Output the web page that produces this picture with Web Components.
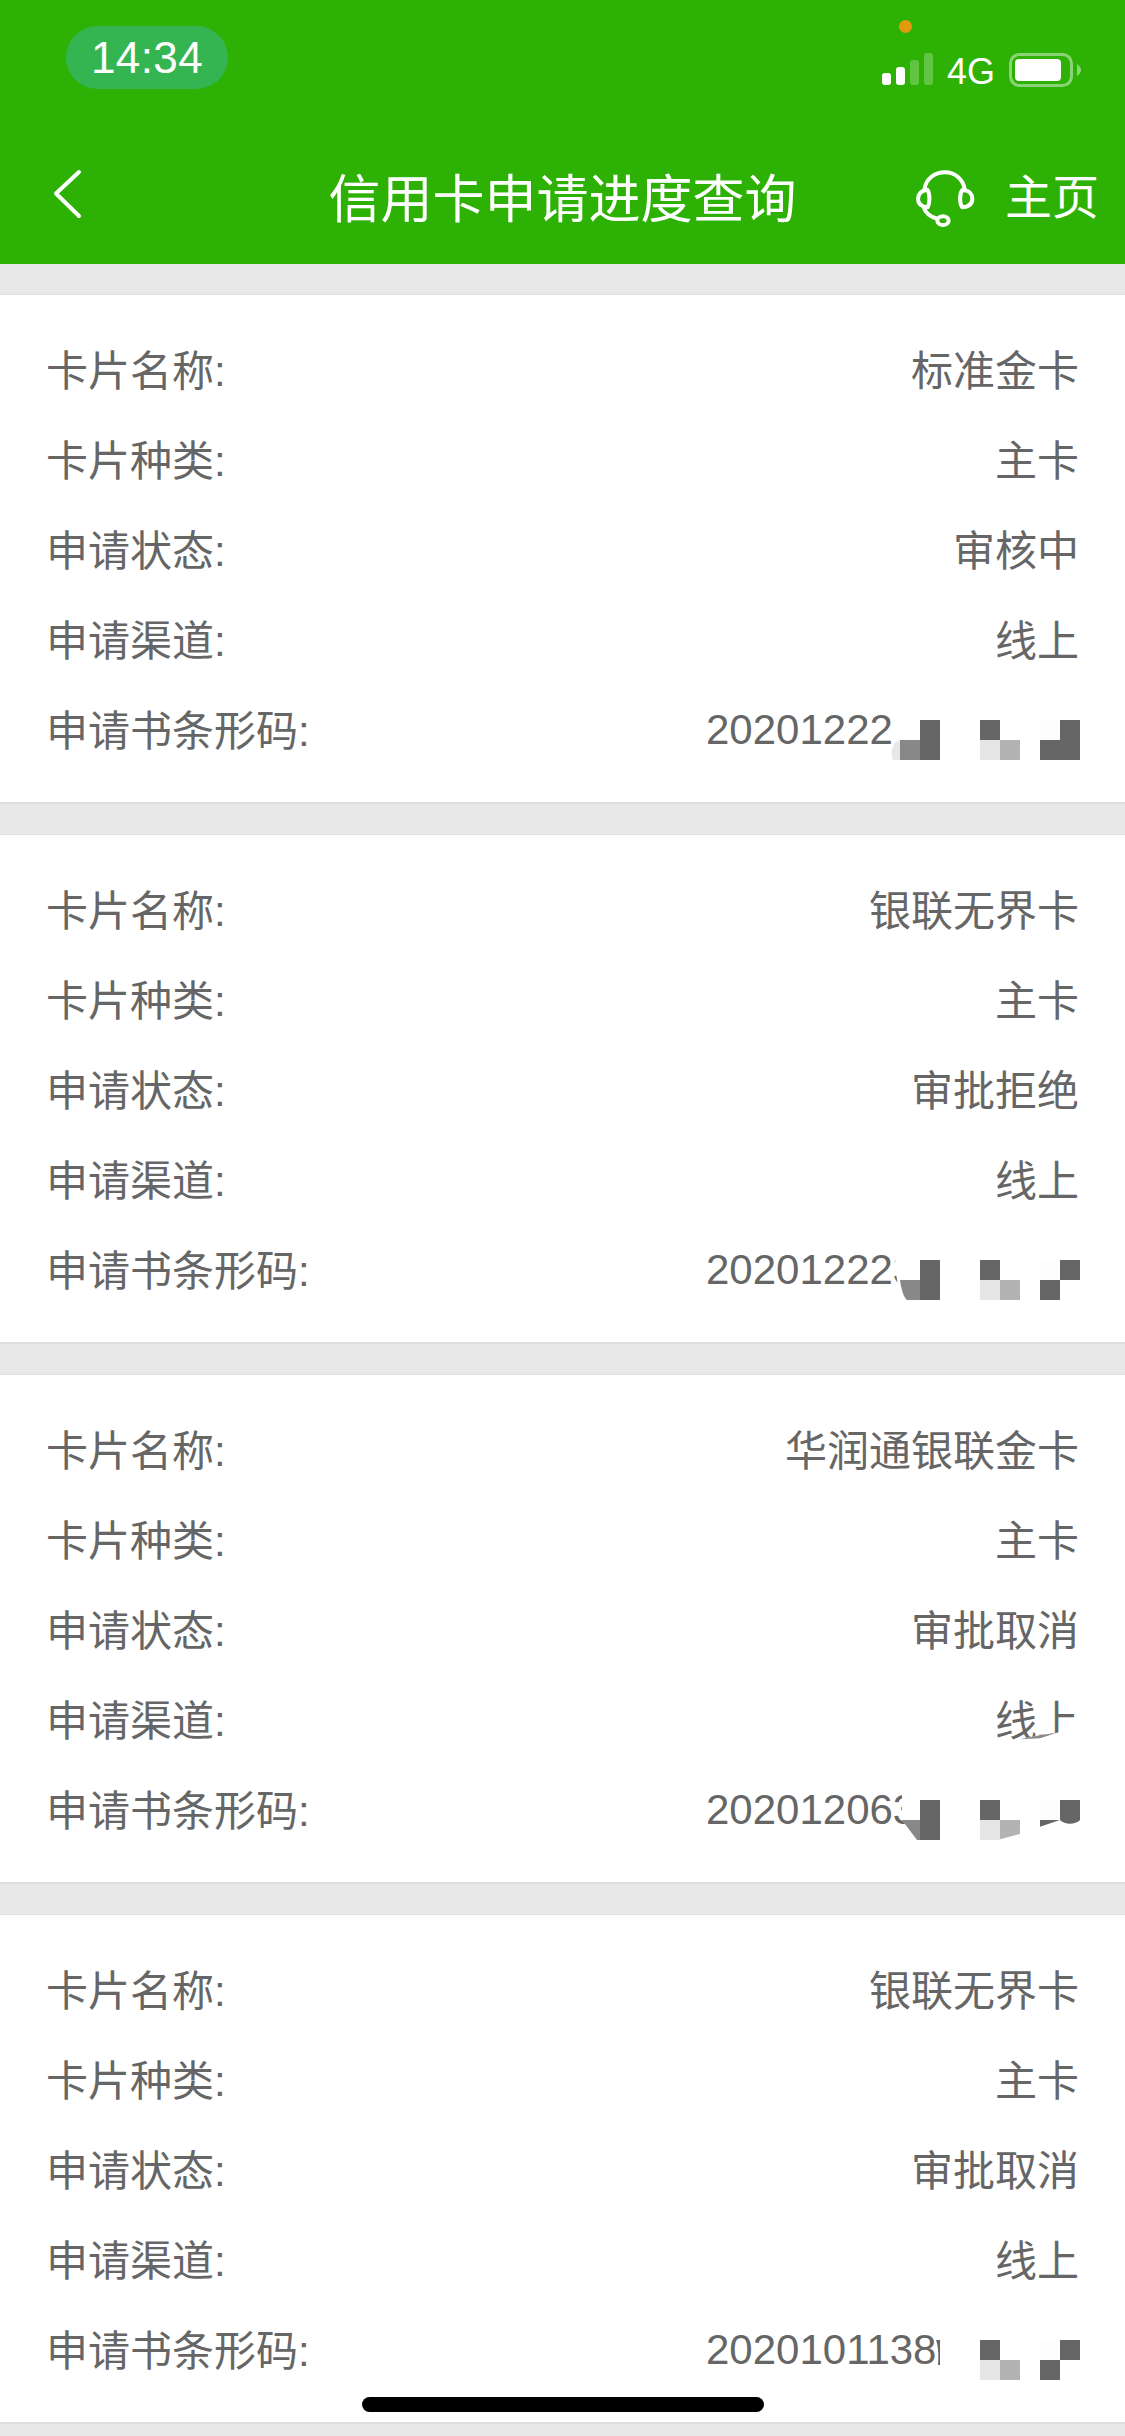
<!DOCTYPE html>
<html lang="zh-CN">
<head>
<meta charset="utf-8">
<title>信用卡申请进度查询</title>
<style>
html,body{margin:0;padding:0;height:2436px;overflow:hidden;background:#e8e8e8;}
body{font-family:"Liberation Sans","Noto Sans CJK SC",sans-serif;color:#666;position:relative;}
.code{display:block;width:373px;margin-top:6px;}
</style>
</head>
<body>
<app-header></app-header>
<card-list>
  <info-card>
    <info-row><span slot="label">卡片名称:</span>标准金卡</info-row>
    <info-row><span slot="label">卡片种类:</span>主卡</info-row>
    <info-row><span slot="label">申请状态:</span>审核中</info-row>
    <info-row><span slot="label">申请渠道:</span>线上</info-row>
    <info-row><span slot="label">申请书条形码:</span><span class="code">20201222</span><code-mask slot="overlay" variant="a"></code-mask></info-row>
  </info-card>
  <info-card>
    <info-row><span slot="label">卡片名称:</span>银联无界卡</info-row>
    <info-row><span slot="label">卡片种类:</span>主卡</info-row>
    <info-row><span slot="label">申请状态:</span>审批拒绝</info-row>
    <info-row><span slot="label">申请渠道:</span>线上</info-row>
    <info-row><span slot="label">申请书条形码:</span><span class="code">202012223</span><code-mask slot="overlay" variant="b"></code-mask></info-row>
  </info-card>
  <info-card>
    <info-row><span slot="label">卡片名称:</span>华润通银联金卡</info-row>
    <info-row><span slot="label">卡片种类:</span>主卡</info-row>
    <info-row><span slot="label">申请状态:</span>审批取消</info-row>
    <info-row><span slot="label">申请渠道:</span>线上<code-mask slot="overlay" variant="smear"></code-mask></info-row>
    <info-row><span slot="label">申请书条形码:</span><span class="code">202012063</span><code-mask slot="overlay" variant="c"></code-mask></info-row>
  </info-card>
  <info-card>
    <info-row><span slot="label">卡片名称:</span>银联无界卡</info-row>
    <info-row><span slot="label">卡片种类:</span>主卡</info-row>
    <info-row><span slot="label">申请状态:</span>审批取消</info-row>
    <info-row><span slot="label">申请渠道:</span>线上</info-row>
    <info-row><span slot="label">申请书条形码:</span><span class="code">2020101138</span><code-mask slot="overlay" variant="d"></code-mask></info-row>
  </info-card>
</card-list>
<home-indicator></home-indicator>

<script>
function shell(name, html){
  customElements.define(name, class extends HTMLElement{
    constructor(){super();this.attachShadow({mode:'open'}).innerHTML=html;}
  });
}

shell('status-bar', `
<style>
:host{display:flex;justify-content:space-between;align-items:flex-start;height:132px;box-sizing:border-box;padding:26px 44px 0 66px;position:relative;color:#fff;font-family:"Liberation Sans",sans-serif;}
.pill{width:162px;height:63px;border-radius:32px;background:#35b552;display:flex;align-items:center;justify-content:center;font-size:44px;letter-spacing:.4px;line-height:1;}
.right{display:flex;align-items:flex-start;padding-top:27px;}
.net{font-size:36px;line-height:36px;margin:1px 14px 0 14px;letter-spacing:0;}
svg{display:block;}
.dot{position:absolute;left:899px;top:20px;width:13px;height:13px;border-radius:50%;background:#e19a0e;}
</style>
<div class="pill">14:34</div>
<div class="right">
  <svg width="51" height="32" viewBox="0 0 51 32" fill="#fff">
    <rect x="0" y="20" width="9" height="12" rx="3"/>
    <rect x="14" y="14" width="9" height="18" rx="3"/>
    <rect x="28" y="7" width="9" height="25" rx="3" fill-opacity=".25"/>
    <rect x="42" y="0" width="9" height="32" rx="3" fill-opacity=".25"/>
  </svg>
  <span class="net">4G</span>
  <svg width="72" height="34" viewBox="0 0 72 34">
    <rect x="1.5" y="1.5" width="61" height="31" rx="9" fill="none" stroke="#fff" stroke-opacity=".45" stroke-width="3"/>
    <rect x="6" y="6" width="46" height="22" rx="4" fill="#fff"/>
    <path d="M68 11 C71 13 72 15 72 17 C72 19 71 21 68 23Z" fill="#fff" fill-opacity=".45"/>
  </svg>
</div>
<div class="dot"></div>`);

shell('nav-bar', `
<style>
:host{display:grid;grid-template-columns:1fr auto 1fr;align-items:center;height:132px;box-sizing:border-box;padding-bottom:4px;color:#fff;font-family:"Noto Sans CJK SC",sans-serif;}
.back{padding-left:51px;display:flex;margin-bottom:4px;}
.title{font-size:52px;line-height:1;}
.right{display:flex;justify-content:flex-end;align-items:center;gap:29px;padding-right:26px;font-size:47px;line-height:1;}
.right span{margin-bottom:5px;}
svg{display:block;}
.hs{margin-top:6px;}
</style>
<div class="back"><svg width="32" height="50" viewBox="0 0 32 50"><path d="M28 3 L5 24.5 L28 47" fill="none" stroke="#fff" stroke-width="4" stroke-linecap="round" stroke-linejoin="round"/></svg></div>
<div class="title">信用卡申请进度查询</div>
<div class="right">
  <svg class="hs" width="62" height="60" viewBox="105 55 186 180" fill="none" stroke="#fff" stroke-width="12" stroke-linecap="round" stroke-linejoin="round">
    <path d="M137 115 C140 84 168 65 198 65 C228 65 252 85 258 118"/>
    <path d="M146 118 C126 118 117 132 117 145 C117 158 126 168 146 170 C153 158 153 130 146 118Z"/>
    <path d="M250 118 C272 118 280 132 280 145 C280 158 270 168 250 170 C241 158 241 130 250 118Z"/>
    <path d="M134 170 C140 188 154 198 174 204"/>
    <ellipse cx="192" cy="210" rx="17" ry="13"/>
  </svg>
  <span>主页</span>
</div>`);

shell('app-header', `
<style>:host{display:block;background:#2cb104;height:264px;}</style>
<status-bar></status-bar><nav-bar></nav-bar>`);

shell('card-list', `
<style>:host{display:flex;flex-direction:column;gap:30px;padding-top:30px;}</style>
<slot></slot>`);

shell('info-card', `
<style>:host{display:block;background:#fff;border-top:1px solid #e2e2e2;border-bottom:2px solid #dedede;padding:30px 0 27px;box-sizing:border-box;height:510px;}</style>
<slot></slot>`);

shell('info-row', `
<style>
:host{display:flex;justify-content:space-between;align-items:center;height:90px;padding:0 46px 6px;box-sizing:border-box;position:relative;font-size:42px;color:#666;white-space:nowrap;}
.val{display:block;}
</style>
<slot name="label"></slot><span class="val"><slot></slot></span><slot name="overlay"></slot>`);

const R=(x,y,w,h,f)=>`<rect x="${x}" y="${y}" width="${w}" height="${h}" fill="${f}"/>`;
const mid=R(980,35,20,20,'#666')+R(980,55,20,20,'#e6e6e6')+R(1000,55,20,20,'#b3b3b3');
const checker=R(1040,35,20,20,'#fdfdfd')+R(1040,55,20,20,'#666')+R(1060,35,20,20,'#666');
const V={
 a:`<path d="M900 55 C892 57 890 67 893 75 L900 75Z" fill="#e8e8e8"/>`+R(900,55,20,20,'#888')+R(920,35,20,40,'#666')+mid+R(1040,35,20,20,'#fdfdfd')+R(1040,55,20,20,'#666')+R(1060,35,20,40,'#666'),
 b:`<path d="M896 20 C894 40 896 55 900 65 C903 71 906 75 910 80 L920 80 L920 15Z" fill="#fff"/><path d="M900 55 H920 V75 H907 C903 72 901 62 900 55Z" fill="#888"/>`+R(920,35,20,40,'#666')+mid+checker,
 c:`<path d="M902 15 L902 55 L920 78 L920 15Z" fill="#fff"/><path d="M902 55 H920 V75 H917Z" fill="#888"/>`+R(920,35,20,40,'#666')+R(980,35,20,20,'#666')+R(980,55,20,20,'#e6e6e6')+`<path d="M1000 55 H1020 V69 L1000 74.3Z" fill="#b3b3b3"/>`+R(1040,35,20,20,'#fdfdfd')+`<path d="M1060 35 H1080 V55 C1075 60 1065 60 1060 55 L1040 61.7 V55 H1060Z" fill="#666"/>`,
 d:`<path d="M936 35 H940 V60 H938 C939 50 938 40 936 35Z" fill="#666"/>`+mid+checker,
 smear:`<path d="M1020 64.3 L1041 60 L1057 57.7 L1080 55 V78 H1020Z" fill="#fff"/><path d="M1020 64.3 L1040 63.3 L1057 57.7 L1041 60Z" fill="#888"/>`
};
customElements.define('code-mask', class extends HTMLElement{
  constructor(){super();this.attachShadow({mode:'open'});}
  connectedCallback(){
    this.shadowRoot.innerHTML=`<style>:host{position:absolute;left:0;top:0;width:1125px;height:90px;display:block;pointer-events:none;}svg{display:block;}</style>
    <svg width="1125" height="90" viewBox="0 0 1125 90">${V[this.getAttribute('variant')]}</svg>`;
  }
});

shell('home-indicator', `
<style>:host{position:absolute;left:362px;top:2397px;width:402px;height:15px;border-radius:8px;background:#000;display:block;}</style>`);
</script>
</body>
</html>
